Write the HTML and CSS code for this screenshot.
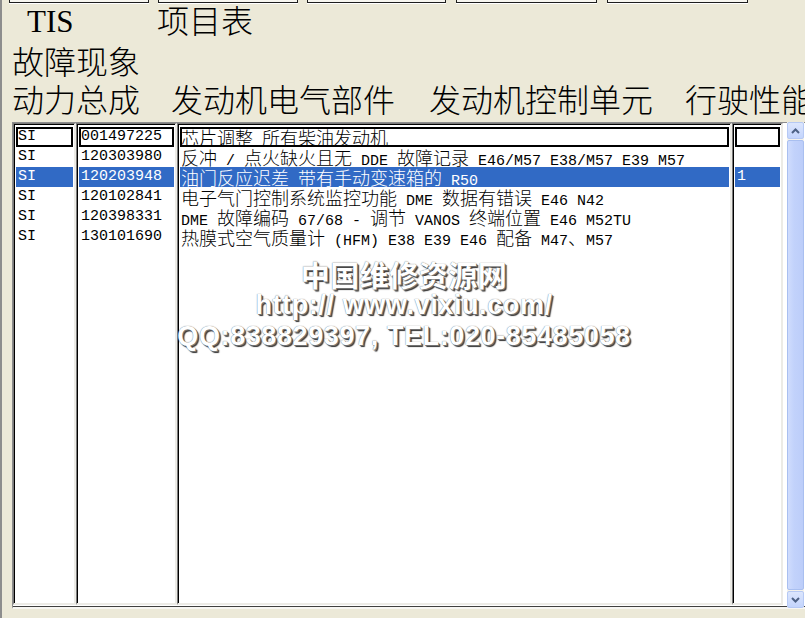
FILE: index.html
```html
<!DOCTYPE html>
<html lang="zh">
<head>
<meta charset="utf-8">
<title>TIS 项目表</title>
<link rel="stylesheet" href="styles.css">
</head>
<body>
<div class="app">
  <div class="tabs">
    <div class="tab w140"></div>
    <div class="tab w140"></div>
    <div class="tab w139"></div>
    <div class="tab w141"></div>
    <div class="tab w141"></div>
  </div>
  <div class="title">
    <span class="tis">TIS</span>
    <span class="proj">项目表</span>
  </div>
  <div class="symptom">故障现象</div>
  <div class="cats">
    <span>动力总成</span>
    <span class="g2">发动机电气部件</span>
    <span class="g3">发动机控制单元</span>
    <span class="g4">行驶性能</span>
  </div>
  <div class="list">
    <div class="col c1">
      <div class="row cur">SI</div>
      <div class="row">SI</div>
      <div class="row sel">SI</div>
      <div class="row">SI</div>
      <div class="row">SI</div>
      <div class="row">SI</div>
    </div>
    <div class="col c2">
      <div class="row cur">001497225</div>
      <div class="row">120303980</div>
      <div class="row sel">120203948</div>
      <div class="row">120102841</div>
      <div class="row">120398331</div>
      <div class="row">130101690</div>
    </div>
    <div class="col c3">
      <div class="row cur"><span class="c">芯片调整</span> <span class="c">所有柴油发动机</span></div>
      <div class="row"><span class="c">反冲</span> / <span class="c">点火缺火且无</span> DDE <span class="c">故障记录</span> E46/M57 E38/M57 E39 M57</div>
      <div class="row sel"><span class="c">油门反应迟差</span> <span class="c">带有手动变速箱的</span> R50</div>
      <div class="row"><span class="c">电子气门控制系统监控功能</span> DME <span class="c">数据有错误</span> E46 N42</div>
      <div class="row">DME <span class="c">故障编码</span> 67/68 - <span class="c">调节</span> VANOS <span class="c">终端位置</span> E46 M52TU</div>
      <div class="row"><span class="c">热膜式空气质量计</span> (HFM) E38 E39 E46 <span class="c">配备</span> M47<span class="c">、</span>M57</div>
    </div>
    <div class="col c4">
      <div class="row cur"></div>
      <div class="row"></div>
      <div class="row sel">1</div>
    </div>
    <div class="scroll">
      <div class="sbtn"><svg width="9" height="6" viewBox="0 0 9 6"><path d="M1 5 L4.5 1.5 L8 5" fill="none" stroke="#4d6185" stroke-width="2"/></svg></div>
      <div class="thumb"></div>
      <div class="sbtn"><svg width="9" height="6" viewBox="0 0 9 6"><path d="M1 1 L4.5 4.5 L8 1" fill="none" stroke="#4d6185" stroke-width="2"/></svg></div>
    </div>
    <div class="watermark">
      <div class="wm-cn">中国维修资源网</div>
      <div class="wm-en">http:// www.vixiu.com/</div>
      <div class="wm-en">QQ:838829397, TEL:020-85485058</div>
    </div>
  </div>
</div>
</body>
</html>
```
FILE: styles.css
```css
html, body {
  margin: 0;
  padding: 0;
  width: 805px;
  height: 618px;
  overflow: hidden;
  background: #ece9d8;
}
.app {
  width: 803px;
  height: 618px;
  border-left: 2px solid #8d8d8d;
  background: #ece9d8;
  overflow: hidden;
  color: #000;
  font-family: "Noto Sans CJK SC", sans-serif;
}
.tabs {
  display: flex;
  gap: 9px;
  padding-left: 7px;
  height: 3px;
}
.tab {
  height: 2px;
  border: 1px solid #1e1e1e;
  border-top: none;
  background: #f7f6f0;
  box-shadow: 0 1px 0 #ffffff;
}
.w139 { width: 137px; }
.w140 { width: 138px; }
.w141 { width: 139px; margin-left: 1px; }
.title {
  display: flex;
  align-items: flex-start;
  height: 38px;
}
.tis {
  font-family: "Liberation Serif", serif;
  font-size: 31px;
  line-height: 30px;
  margin-top: 4px;
  margin-left: 25px;
  width: 130px;
}
.proj {
  font-size: 32px;
  line-height: 32px;
  font-weight: 300;
}
.symptom {
  font-size: 32px;
  line-height: 32px;
  font-weight: 300;
  margin-top: 3px;
  margin-left: 10px;
}
.cats {
  display: flex;
  white-space: nowrap;
  font-size: 32px;
  line-height: 32px;
  font-weight: 300;
  margin-top: 6px;
  margin-left: 10px;
}
.cats .g2 { margin-left: 31px; }
.cats .g3 { margin-left: 34px; }
.cats .g4 { margin-left: 32px; }
.list {
  position: relative;
  margin-top: 8px;
  margin-left: 10px;
  width: 900px;
  height: 484px;
  display: flex;
  align-items: flex-start;
  border-top: 1px solid #8c8c8c;
  border-left: 1px solid #8c8c8c;
  border-bottom: 2px solid #f7f6f2;
  background: #ffffff;
  box-shadow: inset 0 -1px 0 #404040;
}
.col {
  height: 476px;
  border-top: 1px solid #7a7a7a;
  border-left: 1px solid #7a7a7a;
  border-right: 2px solid #ecebe6;
  border-bottom: 2px solid #ecebe6;
  padding: 3px 1px 0 2px;
  box-shadow: inset 1px 1px 0 #000;
  background: #ffffff;
  font-family: "Liberation Mono", monospace;
  font-size: 15px;
}
.c1 { width: 57px; }
.c2 { width: 95px; }
.c3 { width: 549px; }
.c4 { width: 45px; }
.row {
  height: 20px;
  line-height: 20px;
  padding-left: 2px;
  white-space: pre;
  box-sizing: border-box;
}
.c3 .row { padding-left: 1px; }
.row .c {
  font-family: "Noto Sans CJK SC", sans-serif;
  font-size: 18px;
  line-height: 20px;
  font-weight: 300;
}
.row.cur {
  box-shadow: inset 0 0 0 2px #000;
}
.row.sel {
  background: #316ac5;
  color: #ffffff;
}
.scroll {
  margin-left: 4px;
  width: 17px;
  height: 486px;
  margin-top: -1px;
  display: flex;
  flex-direction: column;
  background: #f3f1ea;
}
.sbtn {
  height: 15px;
  border: 1px solid #b6c9f4;
  border-radius: 2px;
  background: linear-gradient(#dce6fd, #c3d4fc);
  display: flex;
  align-items: center;
  justify-content: center;
}
.thumb {
  flex: 1;
  margin: 1px 0;
  border: 1px solid #a9bff0;
  border-radius: 2px;
  background: linear-gradient(90deg, #cfdcfd, #c2d2fb 40%, #bccdf9);
}
.watermark {
  position: absolute;
  left: 0;
  top: 135px;
  width: 782px;
  text-align: center;
  color: #ffffff;
  font-weight: bold;
  text-shadow: 0 0 1px #555, 1px 1px 0 #777, 2px 2px 1px #333;
  pointer-events: none;
}
.wm-cn {
  font-family: "Noto Sans CJK SC", sans-serif;
  font-size: 29px;
  line-height: 32px;
  letter-spacing: 0.5px;
}
.wm-en {
  font-family: "Liberation Sans", sans-serif;
  font-size: 27px;
  line-height: 31px;
  letter-spacing: 0.6px;
}
```
